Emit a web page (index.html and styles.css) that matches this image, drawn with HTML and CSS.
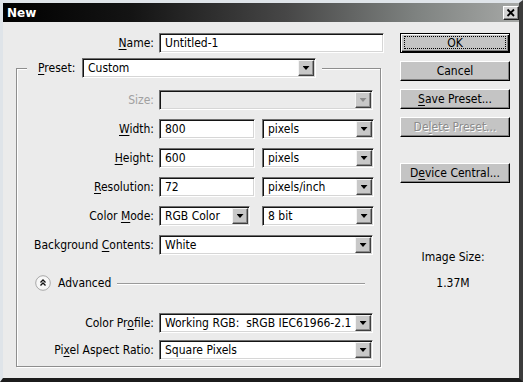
FILE: index.html
```html
<!DOCTYPE html>
<html lang="en">
<head>
  <meta charset="UTF-8">
  <title>New</title>
  <link rel="stylesheet" href="styles.css">
</head>
<body>
  <div class="window">
    <div class="titlebar">
      <span class="title">New</span>
      <span class="close">
        <svg width="14" height="12" viewBox="0 0 14 12"><path d="M3.5 2.5 L10 9 M10 2.5 L3.5 9" stroke="#000" stroke-width="1.8" fill="none"/></svg>
      </span>
    </div>

    <div class="body">
      <div class="main">
        <div class="row row-name">
          <label class="lbl"><u>N</u>ame:</label>
          <div class="field w-name"><span>Untitled-1</span></div>
        </div>

        <fieldset class="group">
          <legend>
            <label class="legend-lbl"><u>P</u>reset:</label>
            <div class="field select w-preset"><span>Custom</span><i class="drop"></i></div>
          </legend>

          <div class="rows">
            <div class="row">
              <label class="lbl off">Size:</label>
              <div class="field select off w-full"><span></span><i class="drop"></i></div>
            </div>
            <div class="row">
              <label class="lbl"><u>W</u>idth:</label>
              <div class="field w-num"><span>800</span></div>
              <div class="field select w-unit"><span>pixels</span><i class="drop"></i></div>
            </div>
            <div class="row">
              <label class="lbl"><u>H</u>eight:</label>
              <div class="field w-num"><span>600</span></div>
              <div class="field select w-unit"><span>pixels</span><i class="drop"></i></div>
            </div>
            <div class="row">
              <label class="lbl"><u>R</u>esolution:</label>
              <div class="field w-num"><span>72</span></div>
              <div class="field select w-unit"><span>pixels/inch</span><i class="drop"></i></div>
            </div>
            <div class="row">
              <label class="lbl">Color <u>M</u>ode:</label>
              <div class="field select w-mode"><span>RGB Color</span><i class="drop"></i></div>
              <div class="field select w-unit"><span>8 bit</span><i class="drop"></i></div>
            </div>
            <div class="row">
              <label class="lbl">Background <u>C</u>ontents:</label>
              <div class="field select w-full"><span>White</span><i class="drop"></i></div>
            </div>
          </div>

          <div class="advanced">
            <svg class="adv-icon" width="16" height="16" viewBox="0 0 16 16">
              <circle cx="8" cy="8" r="7.3" fill="#f7f7f7" stroke="#a8a8a8"/>
              <path d="M5.5 7.5 L8 5 L10.5 7.5 M5.5 10.5 L8 8 L10.5 10.5" stroke="#111" stroke-width="1.3" fill="none"/>
            </svg>
            <span class="adv-text">Advanced</span>
            <span class="adv-line"></span>
          </div>

          <div class="rows adv-rows">
            <div class="row">
              <label class="lbl">Color Pr<u>o</u>file:</label>
              <div class="field select w-full"><span>Working RGB:&nbsp; sRGB IEC61966-2.1</span><i class="drop"></i></div>
            </div>
            <div class="row">
              <label class="lbl">Pi<u>x</u>el Aspect Ratio:</label>
              <div class="field select w-full"><span>Square Pixels</span><i class="drop"></i></div>
            </div>
          </div>
        </fieldset>
      </div>

      <div class="side">
        <div class="btn default">OK</div>
        <div class="btn">Cancel</div>
        <div class="btn"><u>S</u>ave Preset...</div>
        <div class="btn off">De<u>l</u>ete Preset...</div>
        <div class="btn btn-device">D<u>e</u>vice Central...</div>

        <div class="info">
          <div>Image Size:</div>
          <div>1.37M</div>
        </div>
      </div>
    </div>
  </div>
</body>
</html>
```

FILE: styles.css
```css
* {
  box-sizing: border-box;
}

body {
  margin: 0;
  background: #5a5a5a;
  font-family: "DejaVu Sans Condensed", "DejaVu Sans", sans-serif;
  font-size: 12px;
  color: #000;
}

u {
  text-decoration-thickness: 1px;
  text-underline-offset: 2px;
}

.window {
  width: 523px;
  height: 382px;
  background: #ebebeb;
  border-style: solid;
  border-width: 3px 4px 4px 3px;
  border-color: #dfe4e9 #3c3c3c #1c1c1c #dfe4e9;
  display: flex;
  flex-direction: column;
}

/* title bar */
.titlebar {
  height: 19px;
  flex: none;
  display: flex;
  align-items: center;
  justify-content: space-between;
  padding-left: 4px;
  background: linear-gradient(to right, #000 0%, #141414 25%, #474747 55%, #7e8280 80%, #a6a8a6 100%);
}

.title {
  color: #fff;
  font-family: "DejaVu Sans", sans-serif;
  font-weight: bold;
  font-size: 12px;
}

.close {
  width: 16px;
  height: 14px;
  background: #d4d4d4;
  border: 1px solid;
  border-color: #fff #202020 #202020 #fff;
  box-shadow: inset -1px -1px 0 #808080;
  display: flex;
}

/* layout */
.body {
  flex: 1;
  display: flex;
}

.main {
  width: 382px;
  padding-top: 11px;
}

.side {
  width: 110px;
  margin-left: 15px;
  padding-top: 11px;
  display: flex;
  flex-direction: column;
  gap: 8px;
}

/* rows */
.row {
  display: flex;
  align-items: center;
  gap: 5px;
  height: 20px;
}

.lbl {
  width: 137px;
  flex: none;
  text-align: right;
  white-space: nowrap;
}

.row-name .lbl {
  width: 151px;
}

.off {
  color: #a0a0a0;
}

/* fields */
.field {
  height: 20px;
  flex: none;
  display: flex;
  align-items: center;
  padding: 0 1px 0 4px;
  background: #fff;
  border: 1px solid;
  border-color: #707070 #fff #fff #707070;
  box-shadow: inset 1px 1px 0 #141414, inset -1px -1px 0 #d6d6d6;
  white-space: nowrap;
}

.field span {
  flex: 1;
  padding-left: 1px;
}

.field.off {
  background: #ebebeb;
}

.drop {
  width: 16px;
  height: 16px;
  flex: none;
  background: #c8c8c8;
  border: 1px solid;
  border-color: #f4f4f4 #404040 #404040 #f4f4f4;
  box-shadow: inset -1px -1px 0 #8a8a8a;
  display: flex;
  align-items: center;
  justify-content: center;
}

.drop::after {
  content: "";
  width: 7px;
  height: 4px;
  background: #000;
  clip-path: polygon(0 0, 100% 0, 50% 100%);
}

.off .drop::after {
  background: #8c8c8c;
}

.w-name { width: 225px; }
.w-preset { width: 234px; }
.w-full { width: 214px; }
.w-num { width: 96px; }
.w-unit { width: 112px; margin-left: 2px; }
.w-mode { width: 91px; }
.w-mode + .w-unit { margin-left: 7px; }

/* group box */
.group {
  width: 365px;
  margin: 5px 0 0 13px;
  padding: 0 0 6px 0;
  min-inline-size: 0;
  border: 1px solid #8e8e8e;
  box-shadow: inset 1px 1px 0 #fff, 1px 1px 0 #fff;
}

.group legend {
  margin-left: 10px;
  padding: 0 6px 0 11px;
  background: #ebebeb;
  display: flex;
  align-items: center;
}

.legend-lbl {
  width: 44px;
}

.rows {
  display: flex;
  flex-direction: column;
  gap: 9px;
  margin-top: 12px;
}

.adv-rows {
  margin-top: 22px;
  gap: 7px;
}

.advanced {
  height: 16px;
  margin-top: 20px;
  padding-left: 18px;
  display: flex;
  align-items: center;
}

.adv-text {
  margin-left: 7px;
}

.adv-line {
  flex: 1;
  height: 2px;
  margin: 1px 15px 0 6px;
  border-top: 1px solid #9a9a9a;
  border-bottom: 1px solid #fff;
}

/* buttons */
.btn {
  position: relative;
  height: 20px;
  line-height: 18px;
  text-align: center;
  background: #c4c4c4;
  border: 1px solid;
  border-color: #fff #000 #000 #fff;
  box-shadow: inset -1px -1px 0 #808080;
}

.btn.default {
  border-color: #000;
  box-shadow: inset 1px 1px 0 #fff, inset -1px -1px 0 #000, inset -2px -2px 0 #808080;
}

.btn.default::after {
  content: "";
  position: absolute;
  top: 2px;
  left: 3px;
  right: 3px;
  bottom: 3px;
  border: 1px dotted #000;
}

.btn.off {
  color: #8c8c8c;
  text-shadow: 1px 1px 0 #fff;
}

.btn-device {
  margin-top: 18px;
}

.info {
  margin-top: 59px;
  display: flex;
  flex-direction: column;
  gap: 12px;
  line-height: 14px;
  text-align: center;
  padding-right: 4px;
}
```
